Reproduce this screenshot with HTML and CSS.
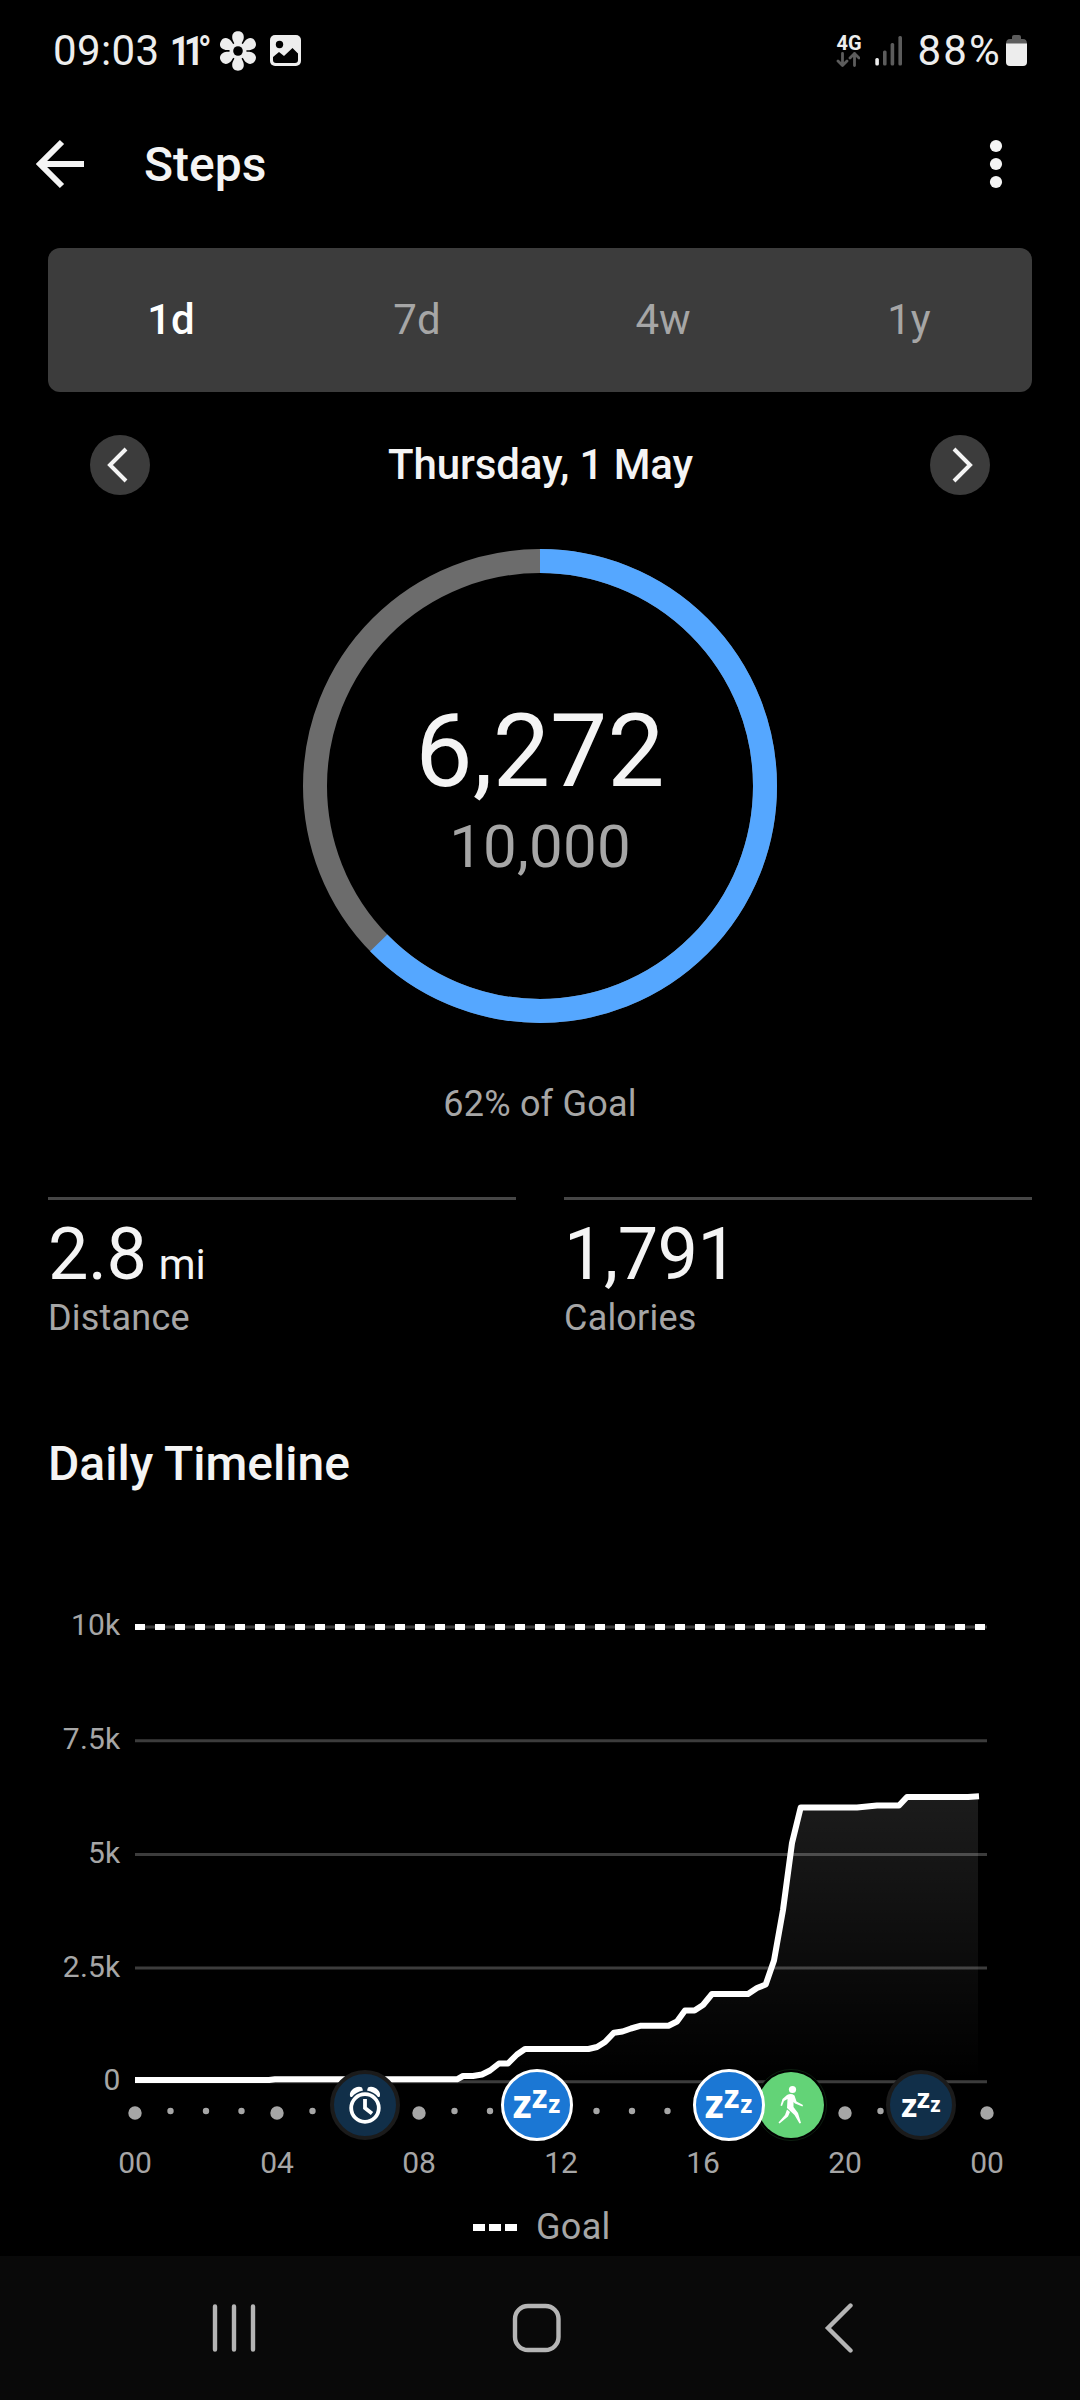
FILE: index.html
```html
<!DOCTYPE html>
<html lang="en">
<head>
    <meta charset="UTF-8">
    <meta name="viewport" content="width=device-width, initial-scale=1.0">
    <title>Steps</title>
    <link rel="stylesheet" href="styles.css">
</head>
<body>

    <!-- Status bar -->
    <div class="status-bar">
        <span class="clock">09:03</span>
        <span class="temp">11°</span>
        <svg class="flower" width="38" height="40" viewBox="-19 -20 38 40">
            <defs>
                <path id="petal" d="M-2.5 -4.5 C-3 -8 -5.8 -10 -5.8 -14 C-5.8 -18 -3 -19.7 0 -19.7 C3 -19.7 5.8 -18 5.8 -14 C5.8 -10 3 -8 2.5 -4.5 Z"/>
            </defs>
            <g fill="#ededed">
                <use href="#petal"/>
                <use href="#petal" transform="rotate(60)"/>
                <use href="#petal" transform="rotate(120)"/>
                <use href="#petal" transform="rotate(180)"/>
                <use href="#petal" transform="rotate(240)"/>
                <use href="#petal" transform="rotate(300)"/>
                <circle r="8.5"/>
            </g>
            <circle r="4.8" fill="#000"/>
        </svg>
        <svg class="photo" width="31" height="31" viewBox="0 0 31 31">
            <rect width="31" height="31" rx="5" fill="#ededed"/>
            <circle cx="9.5" cy="9.5" r="3.7" fill="#000"/>
            <path d="M3 22 L9 17 L14 21 L22.5 13 L28 18.5 V25 Q28 28 25 28 H6 Q3 28 3 25 Z" fill="#000"/>
        </svg>
        <div class="status-right">
            <div class="network">
                <span>4G</span>
                <svg width="24" height="15" viewBox="0 0 24 15" fill="none" stroke="#5c5c5c" stroke-width="2.8" stroke-linecap="round" stroke-linejoin="round">
                    <path d="M6.5 1.5 V13.5 M2 9 L6.5 13.5 L11 9"/>
                    <path d="M18.5 13.5 V1.5 M14 6 L18.5 1.5 L23 6"/>
                </svg>
            </div>
            <svg class="signal" width="28" height="30" viewBox="0 0 28 30">
                <rect x="0.3" y="22" width="3.6" height="7.5" rx="1.5" fill="#ededed"/>
                <rect x="8" y="14.5" width="3.6" height="15" rx="1.5" fill="#5c5c5c"/>
                <rect x="15.6" y="7" width="3.6" height="22.5" rx="1.5" fill="#5c5c5c"/>
                <rect x="23.4" y="0" width="3.6" height="29.5" rx="1.5" fill="#5c5c5c"/>
            </svg>
            <span class="percent">88%</span>
            <svg class="battery" width="21" height="31" viewBox="0 0 21 31">
                <path d="M6 2 Q6 0 8 0 H13 Q15 0 15 2 V4 H17 Q21 4 21 9 H0 Q0 4 4 4 H6 Z" fill="#5c5c5c"/>
                <path d="M0 8.5 H21 V27 Q21 31 17 31 H4 Q0 31 0 27 Z" fill="#ededed"/>
            </svg>
        </div>
    </div>

    <!-- App bar -->
    <header class="app-bar">
        <svg width="50" height="50" viewBox="0 0 50 50" fill="none" stroke="#f4f4f4" stroke-width="6">
            <path d="M49 25 H6 M27 3 L5 25 L27 47"/>
        </svg>
        <h1>Steps</h1>
        <svg class="more" width="14" height="50" viewBox="0 0 14 50" fill="#f4f4f4">
            <circle cx="7" cy="7" r="6.1"/>
            <circle cx="7" cy="25" r="6.1"/>
            <circle cx="7" cy="43" r="6.1"/>
        </svg>
    </header>

    <main>
        <div class="tabs">
            <span class="tab active">1d</span>
            <span class="tab">7d</span>
            <span class="tab">4w</span>
            <span class="tab">1y</span>
        </div>

        <div class="date-row">
            <button class="round-button">
                <svg width="60" height="60" viewBox="0 0 60 60"><path d="M36 14 L20 30 L36 46"/></svg>
            </button>
            <h2>Thursday, 1 May</h2>
            <button class="round-button">
                <svg width="60" height="60" viewBox="0 0 60 60"><path d="M24 14 L40 30 L24 46"/></svg>
            </button>
        </div>

        <div class="ring">
            <svg width="476" height="476" viewBox="0 0 476 476" fill="none" stroke-width="24">
                <circle cx="238" cy="238" r="225" stroke="#6c6c6c"/>
                <circle cx="238" cy="238" r="225" stroke="#55a7ff" pathLength="100" stroke-dasharray="62.72 100" transform="rotate(-90 238 238)"/>
            </svg>
            <div class="ring-text">
                <div class="steps">6,272</div>
                <div class="goal">10,000</div>
            </div>
        </div>
        <p class="goal-percent">62% of Goal</p>

        <div class="stats">
            <div class="stat">
                <div class="value">2.8 <small>mi</small></div>
                <div class="label">Distance</div>
            </div>
            <div class="stat">
                <div class="value">1,791</div>
                <div class="label">Calories</div>
            </div>
        </div>

        <h3>Daily Timeline</h3>
    </main>

    <svg class="chart" width="1080" height="713" viewBox="0 0 1080 713">
        <defs>
            <linearGradient id="area" gradientUnits="userSpaceOnUse" x1="0" y1="304" x2="0" y2="588">
                <stop offset="0" stop-color="#fff" stop-opacity="0.11"/>
                <stop offset="1" stop-color="#fff" stop-opacity="0"/>
            </linearGradient>
        </defs>

        <!-- Grid -->
        <g stroke="#3c3c3c" stroke-width="3">
            <path d="M135 135 H987 M135 248.7 H987 M135 362.5 H987 M135 476 H987 M135 589.7 H987"/>
        </g>
        <path class="goal-line" d="M135 135 H987"/>

        <g class="y-labels">
            <text x="120.5" y="143">10k</text>
            <text x="120.5" y="257">7.5k</text>
            <text x="120.5" y="371">5k</text>
            <text x="120.5" y="485">2.5k</text>
            <text x="120.5" y="598">0</text>
        </g>

        <!-- Steps over the day -->
        <path fill="url(#area)" d="M457 588 L463 584 L482 582.5 L499 571.5 L508 571.5 L525 557 L588.5 557 L605 550 L614 540.7 L641 533.7 L668.5 533.7 L685 518.5 L694.5 518.5 L712 502 L748 502 L765.7 492.5 L774 468.5 L783 418 L792 351 L800.7 315.5 L857 315.5 L877 313.5 L899 313.5 L907 305 L978 305 V588 Z"/>
        <polyline class="steps-line" points="135,588 269,588 275,587.3 457,587.3 463,584 473,584 482,582.5 490,578.5 499,571.5 508,571.5 517,562.5 525,557 588.5,557 597,555 605,550 614,540.7 622.5,539.5 631,536.5 641,533.7 668.5,533.7 677,529.5 685,518.5 694.5,518.5 703,513 712,502 748,502 757,496 765.7,492.5 774,468.5 783,418 792,351 800.7,315.5 857,315.5 877,313.5 899,313.5 907,305 968,305 979,304.3"/>

        <!-- Hour dots -->
        <g stroke="#a6a6a6" stroke-linecap="round">
            <path stroke-width="6.4" stroke-dasharray="0 35.5" d="M135 619 H988"/>
            <path stroke-width="13.4" stroke-dasharray="0 142" d="M135 621 H988"/>
        </g>

        <g class="x-labels">
            <text x="135" y="681">00</text>
            <text x="277" y="681">04</text>
            <text x="419" y="681">08</text>
            <text x="561" y="681">12</text>
            <text x="703" y="681">16</text>
            <text x="845" y="681">20</text>
            <text x="987" y="681">00</text>
        </g>

        <!-- Alarm -->
        <g transform="translate(365 613)">
            <circle r="33" fill="#112f49" stroke="#1b1b1b" stroke-width="4"/>
            <g fill="none" stroke="#fff" stroke-width="3.8">
                <circle cy="3" r="13.8"/>
                <path d="M0 -6 V3 L7 8.5"/>
            </g>
            <path fill="#fff" d="M-14.5 -8 C-17.5 -13 -9 -20.5 -3 -17.5 L-2 -14.5 Q-9.5 -13 -13 -8 Z"/>
            <path fill="#fff" d="M14.5 -8 C17.5 -13 9 -20.5 3 -17.5 L2 -14.5 Q9.5 -13 13 -8 Z"/>
        </g>

        <!-- Walk -->
        <g transform="translate(791 613)">
            <circle r="35.5" fill="#000" stroke="#16331b" stroke-width="0.6"/>
            <circle r="33" fill="#63d377"/>
            <g fill="#fff">
                <circle cx="1.5" cy="-15.5" r="3.6"/>
                <path d="M-4 -10 Q0 -12 3.5 -9.5 L5.5 -3.5 L12 0 L11.5 1.5 L4 -1.5 L2.5 -3 L2.5 2 L7 8 L10 18 L8.5 18.5 L3.5 10 L-4 3 L-3.5 -6 L-7 -4 L-9 1 L-10.5 0.5 L-8.5 -6 Z"/>
                <path d="M-4 4.5 L-1 7 L-3 11.5 L-11.5 18.5 L-12.5 17.5 L-6 10 Z"/>
            </g>
        </g>

        <!-- Sleep -->
        <g class="sleep" transform="translate(537 613)">
            <circle r="34.5" fill="#1b77d4" stroke="#fff" stroke-width="3"/>
            <text x="-24.4" y="13.3" font-size="39">z</text>
            <text x="-5.2" y="3.3" font-size="32">z</text>
            <text x="11.2" y="7.7" font-size="24.5">z</text>
        </g>
        <g class="sleep" transform="translate(729 613)">
            <circle r="34.5" fill="#1b77d4" stroke="#fff" stroke-width="3"/>
            <text x="-24.4" y="13.3" font-size="39">z</text>
            <text x="-5.2" y="3.3" font-size="32">z</text>
            <text x="11.2" y="7.7" font-size="24.5">z</text>
        </g>
        <g class="sleep" transform="translate(921 613)">
            <circle r="33" fill="#112f49" stroke="#1b1b1b" stroke-width="4"/>
            <text x="-20" y="12" font-size="33">z</text>
            <text x="-4.2" y="3" font-size="27">z</text>
            <text x="9.2" y="7" font-size="21">z</text>
        </g>
    </svg>

    <div class="legend">
        <svg width="44" height="7" viewBox="0 0 44 7"><path d="M0 3.5 H44" stroke="#fff" stroke-width="7" stroke-dasharray="12 4"/></svg>
        <span>Goal</span>
    </div>

    <!-- Navigation buttons -->
    <nav class="nav-bar">
        <svg width="48" height="48" viewBox="0 0 48 48"><path d="M5 2.5 V45.5 M24 2.5 V45.5 M43 2.5 V45.5"/></svg>
        <svg class="home" width="50" height="50" viewBox="0 0 50 50"><rect x="3" y="3" width="43.5" height="44" rx="13"/></svg>
        <svg width="30" height="50" viewBox="0 0 30 50"><path d="M26.5 2.5 L4 25 L26.5 47.5"/></svg>
    </nav>

</body>
</html>
```
FILE: styles.css
```css
* {
    box-sizing: border-box;
}
body {
    margin: 0;
    width: 1080px;
    height: 2400px;
    display: flex;
    flex-direction: column;
    background-color: #000;
    color: #f4f4f4;
    font-family: Roboto, "Liberation Sans", sans-serif;
}
svg {
    display: block;
    flex-shrink: 0;
}
h1, h2, h3, p {
    margin: 0;
    font-weight: 500;
}
.status-bar {
    height: 101px;
    padding: 0 53px 0 53px;
    display: flex;
    align-items: center;
    color: #ededed;
}
.clock, .percent {
    font-size: 42px;
    line-height: 50px;
    letter-spacing: 0.4px;
}
.clock {
    width: 117px;
}
.temp {
    width: 49px;
    font-size: 41px;
    font-weight: 700;
    letter-spacing: -7px;
    transform: scaleX(0.85);
    transform-origin: left;
}
.photo {
    margin-left: 13px;
}
.status-right {
    margin-left: auto;
    display: flex;
    align-items: center;
}
.network {
    width: 24px;
    margin-right: 15px;
    font-size: 20px;
    font-weight: 700;
    line-height: 18px;
}
.percent {
    margin: 0 4px 0 14px;
    letter-spacing: 2.2px;
}
.app-bar {
    height: 127px;
    padding: 0 77px 0 35px;
    display: flex;
    align-items: center;
}
.app-bar svg {
    margin-bottom: 1px;
}
.app-bar h1 {
    margin-left: 59px;
    font-size: 48px;
    line-height: 56px;
}
.more {
    margin-left: auto;
}
main {
    padding: 20px 48px 0;
}
.tabs {
    height: 144px;
    display: grid;
    grid-template-columns: repeat(4, 1fr);
    align-items: center;
    text-align: center;
    border-radius: 12px;
    background-color: #3c3c3c;
}
.tab {
    font-size: 42px;
    line-height: 50px;
    color: #a6a6a6;
}
.tab.active {
    color: #fff;
    font-weight: 500;
}
.date-row {
    margin-top: 43px;
    padding: 0 42px;
    display: flex;
    align-items: center;
    justify-content: space-between;
}
.date-row h2 {
    padding-left: 1px;
    font-size: 42px;
    line-height: 50px;
    letter-spacing: -0.1px;
}
.round-button {
    width: 60px;
    height: 60px;
    padding: 0;
    border: none;
    border-radius: 50%;
    background-color: #3c3c3c;
}
.round-button path {
    fill: none;
    stroke: #f4f4f4;
    stroke-width: 4;
}
.ring {
    margin-top: 53px;
    display: grid;
    justify-items: center;
}
.ring > * {
    grid-area: 1 / 1;
}
.ring-text {
    padding-top: 148px;
    text-align: center;
}
.steps {
    font-size: 102px;
    line-height: 110px;
}
.goal {
    margin-top: 6px;
    font-size: 60px;
    line-height: 70px;
    letter-spacing: 0.2px;
    color: #a6a6a6;
}
.goal-percent {
    margin-top: 58px;
    font-size: 36px;
    line-height: 44px;
    font-weight: 400;
    letter-spacing: 0.2px;
    text-align: center;
    color: #a6a6a6;
}
.stats {
    margin-top: 71px;
    display: grid;
    grid-template-columns: 1fr 1fr;
    gap: 48px;
}
.stat {
    padding-top: 13px;
    border-top: 3px solid #464646;
}
.value {
    font-size: 72px;
    line-height: 84px;
    letter-spacing: -0.5px;
    word-spacing: -5px;
}
.value small {
    font-size: 42px;
    line-height: 1;
    letter-spacing: 0;
}
.label {
    font-size: 36px;
    line-height: 42px;
    letter-spacing: 0.2px;
    color: #a6a6a6;
}
h3 {
    margin-top: 97px;
    font-size: 48px;
    line-height: 56px;
}
.goal-line {
    stroke: #fff;
    stroke-width: 6;
    stroke-dasharray: 10 10;
}
.steps-line {
    fill: none;
    stroke: #fff;
    stroke-width: 6;
    stroke-linejoin: round;
}
.y-labels, .x-labels {
    fill: #a6a6a6;
    font-size: 30px;
}
.y-labels {
    text-anchor: end;
    letter-spacing: 0.2px;
}
.x-labels {
    text-anchor: middle;
}
.sleep text {
    fill: #fff;
    font-family: "Noto Sans", "Open Sans", sans-serif;
    font-weight: 700;
}
.legend {
    padding-left: 473px;
    display: flex;
    align-items: center;
    gap: 19px;
    font-size: 36px;
    line-height: 44px;
    letter-spacing: 0.3px;
    color: #a6a6a6;
}
.nav-bar {
    height: 144px;
    margin-top: auto;
    padding: 0 226px 0 210px;
    display: flex;
    align-items: center;
    justify-content: space-between;
    background-color: #090909;
}
.nav-bar path, .nav-bar rect {
    fill: none;
    stroke: #b5b5b5;
    stroke-width: 4.4;
    stroke-linecap: round;
}
.nav-bar .home {
    margin-right: 8px;
}
```
